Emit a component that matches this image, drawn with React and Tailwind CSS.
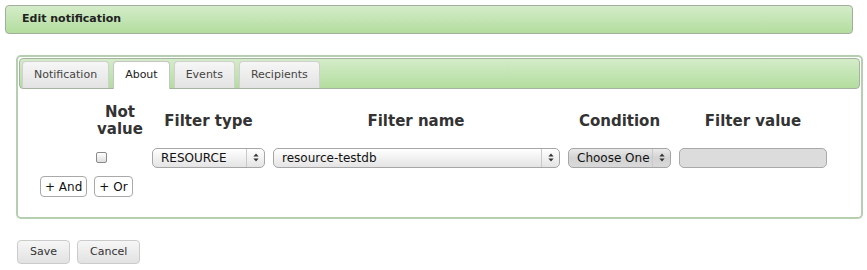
import React from "react";

function Arrows() {
  return (
    <svg width="6" height="9" viewBox="0 0 6 9" className="shrink-0">
      <path d="M3 0.5 L5.6 3.6 H0.4 Z" fill="#333" />
      <path d="M3 8.5 L5.6 5.4 H0.4 Z" fill="#333" />
    </svg>
  );
}

function Select({ value, width, dark }) {
  return (
    <div
      className={`flex h-[20px] items-center rounded-[5px] border border-[#a6a6a6] text-[12px] text-[#111] ${
        dark ? "bg-gradient-to-b from-[#e9e9e9] via-[#d3d3d3] to-[#d9d9d9]" : "bg-gradient-to-b from-[#ffffff] via-[#f1f1f1] to-[#e4e4e4]"
      }`}
      style={{ width }}
    >
      <span className="flex-1 truncate pl-[8px] leading-none">{value}</span>
      <div className="flex h-full w-[18px] items-center justify-center border-l border-[#c9c9c9]">
        <Arrows />
      </div>
    </div>
  );
}

function Tab({ label, active }) {
  return (
    <div
      className={`flex h-[27px] items-center rounded-t-[4px] border border-b-0 px-[11px] text-[11px] ${
        active
          ? "relative z-10 mb-[-1px] h-[28px] border-[#c5c5c5] bg-white text-[#222]"
          : "border-[#d0d0d0] bg-gradient-to-b from-[#f6f6f6] to-[#e3e3e3] text-[#444]"
      }`}
    >
      {label}
    </div>
  );
}

function SmallButton({ children }) {
  return (
    <div className="flex h-[21px] items-center rounded-[4px] border border-[#a9a9a9] bg-white px-[4px] text-[12px] text-[#111]">
      {children}
    </div>
  );
}

function GrayButton({ children }) {
  return (
    <div className="flex h-[24px] items-center rounded-[4px] border border-[#cbcbcb] bg-gradient-to-b from-[#f6f6f6] to-[#e2e2e2] px-[12px] text-[11px] text-[#333]">
      {children}
    </div>
  );
}

export default function App() {
  return (
    <div className="h-[270px] w-[867px] bg-white pt-[5px] font-['DejaVu_Sans',sans-serif]">
      <div className="ml-[5px] flex h-[29px] w-[848px] items-center rounded-[4px] border border-[#a2ae9d] bg-gradient-to-b from-[#d4ecc9] to-[#b3dd9e] pl-[16px] text-[11px] font-bold text-[#222]">
        Edit notification
      </div>

      <div className="ml-[16px] mt-[21px] w-[847px] rounded-[5px] border-2 border-[#b6cfb0] bg-white p-px">
        <div className="flex h-[31px] items-end gap-[4px] rounded-[4px] border border-[#a6b3a1] bg-gradient-to-b from-[#d4ecc9] to-[#b3dd9e] pl-[2px]">
          <Tab label="Notification" />
          <Tab label="About" active />
          <Tab label="Events" />
          <Tab label="Recipients" />
        </div>

        <div className="h-[127px] pt-[15px]">
          <div className="flex items-center pl-[72px] text-[15px] font-bold leading-[17px] text-[#333]">
            <div className="w-[58px] text-center">
              Not
              <br />
              value
            </div>
            <div className="w-[119px] text-center">Filter type</div>
            <div className="w-[296px] text-center">Filter name</div>
            <div className="w-[111px] text-center">Condition</div>
            <div className="w-[156px] text-center">Filter value</div>
          </div>

          <div className="mt-[9px] flex h-[21px] items-center pl-[72px]">
            <div className="w-[58px] pl-[5px]">
              <div className="h-[11px] w-[11px] rounded-[2px] border border-[#8a8a8a] bg-gradient-to-b from-white to-[#dedede]" />
            </div>
            <div className="w-[119px] pl-[3px]">
              <Select value="RESOURCE" width={113} />
            </div>
            <div className="w-[296px] pl-[5px]">
              <Select value="resource-testdb" width={287} />
            </div>
            <div className="w-[111px] pl-[4px]">
              <Select value="Choose One" width={103} dark />
            </div>
            <div className="w-[156px] pl-[4px]">
              <div className="h-[20px] w-[148px] rounded-[5px] border border-[#a9a9a9] bg-[#dcdcdc]" />
            </div>
          </div>

          <div className="mt-[8px] flex gap-[7px] pl-[21px]">
            <SmallButton>+ And</SmallButton>
            <SmallButton>+ Or</SmallButton>
          </div>
        </div>
      </div>

      <div className="ml-[17px] mt-[21px] flex gap-[7px]">
        <GrayButton>Save</GrayButton>
        <GrayButton>Cancel</GrayButton>
      </div>
    </div>
  );
}
